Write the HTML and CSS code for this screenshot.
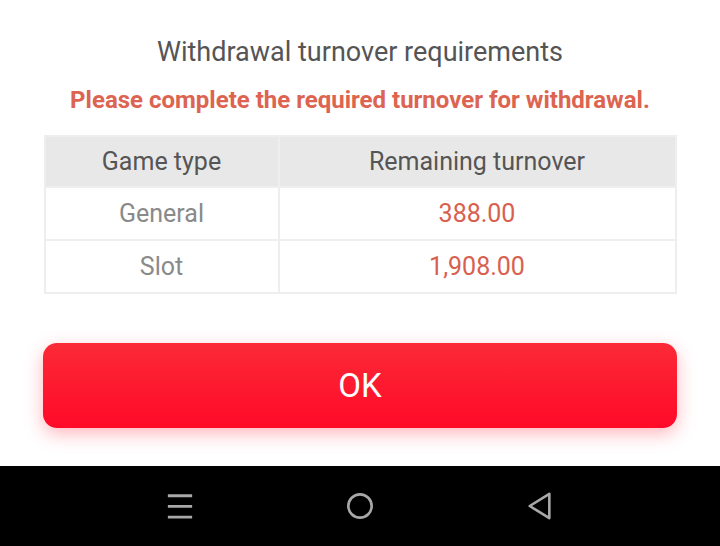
FILE: index.html
```html
<!DOCTYPE html>
<html lang="en">

<head>
  <meta charset="UTF-8">
  <meta name="viewport" content="width=device-width, initial-scale=1.0">
  <title>Withdrawal turnover requirements</title>
  <link rel="stylesheet" href="styles.css">
</head>

<body>
  <main class="dialog">
    <h2 class="title">Withdrawal turnover requirements</h2>
    <p class="notice">Please complete the required turnover for withdrawal.</p>

    <table class="turnover">
      <thead>
        <tr>
          <th>Game type</th>
          <th>Remaining turnover</th>
        </tr>
      </thead>
      <tbody>
        <tr>
          <td>General</td>
          <td class="amount">388.00</td>
        </tr>
        <tr>
          <td>Slot</td>
          <td class="amount">1,908.00</td>
        </tr>
      </tbody>
    </table>

    <button class="ok">OK</button>
  </main>

  <nav class="navbar">
    <svg class="nav-icon" viewBox="0 0 30 30" fill="none" stroke="#a8a8a8" stroke-width="3">
      <path d="M2 4h26M2 15.5h26M2 27h26" />
    </svg>
    <svg class="nav-icon" viewBox="0 0 30 30" fill="none" stroke="#a8a8a8" stroke-width="2.8">
      <circle cx="15" cy="15" r="12.5" />
    </svg>
    <svg class="nav-icon" viewBox="0 0 30 30" fill="none" stroke="#a8a8a8" stroke-width="2.8" stroke-linejoin="round">
      <path d="M25 2 4 15l21 13z" />
    </svg>
  </nav>
</body>

</html>
```

FILE: styles.css
```css
body {
  margin: 0;
  font-family: Roboto, "Noto Sans", sans-serif;
  background: #fff;
  width: 720px;
  height: 546px;
  overflow: hidden;
  display: flex;
  flex-direction: column;
}

.dialog {
  flex: 1;
  display: flex;
  flex-direction: column;
  align-items: center;
  padding: 36px 43px 0;
}

.title {
  margin: 0;
  font-size: 27px;
  font-weight: 400;
  line-height: 32px;
  color: #555;
}

.notice {
  margin: 18px 0 0;
  font-size: 24px;
  font-weight: 700;
  line-height: 28px;
  color: #dc6450;
}

.turnover {
  margin-top: 21px;
  width: 633px;
  border-collapse: collapse;
  border: 2px solid #eeeeee;
  font-size: 25px;
  text-align: center;
}

.turnover th,
.turnover td {
  border: 2px solid #eeeeee;
  height: 51px;
  padding: 0;
}

.turnover th {
  background: #e8e8e8;
  font-weight: 400;
  color: #555;
  height: 49px;
}

.turnover th:first-child {
  width: 232px;
}

.turnover td {
  color: #8a8a8a;
}

.turnover .amount {
  color: #d8604e;
}

.ok {
  margin-top: 49px;
  width: 634px;
  height: 85px;
  border: 0;
  border-radius: 14px;
  background: linear-gradient(to bottom, #fb2a37, #ff0a28);
  box-shadow: 0 6px 18px hsl(355deg 100% 60% / 0.35);
  color: #fff;
  font-family: Roboto, "Noto Sans", sans-serif;
  font-size: 33px;
  cursor: pointer;
}

.navbar {
  height: 80px;
  background: #000;
  display: flex;
  align-items: center;
  justify-content: space-between;
  padding: 0 166px;
}

.nav-icon {
  width: 28px;
  height: 28px;
}
```
